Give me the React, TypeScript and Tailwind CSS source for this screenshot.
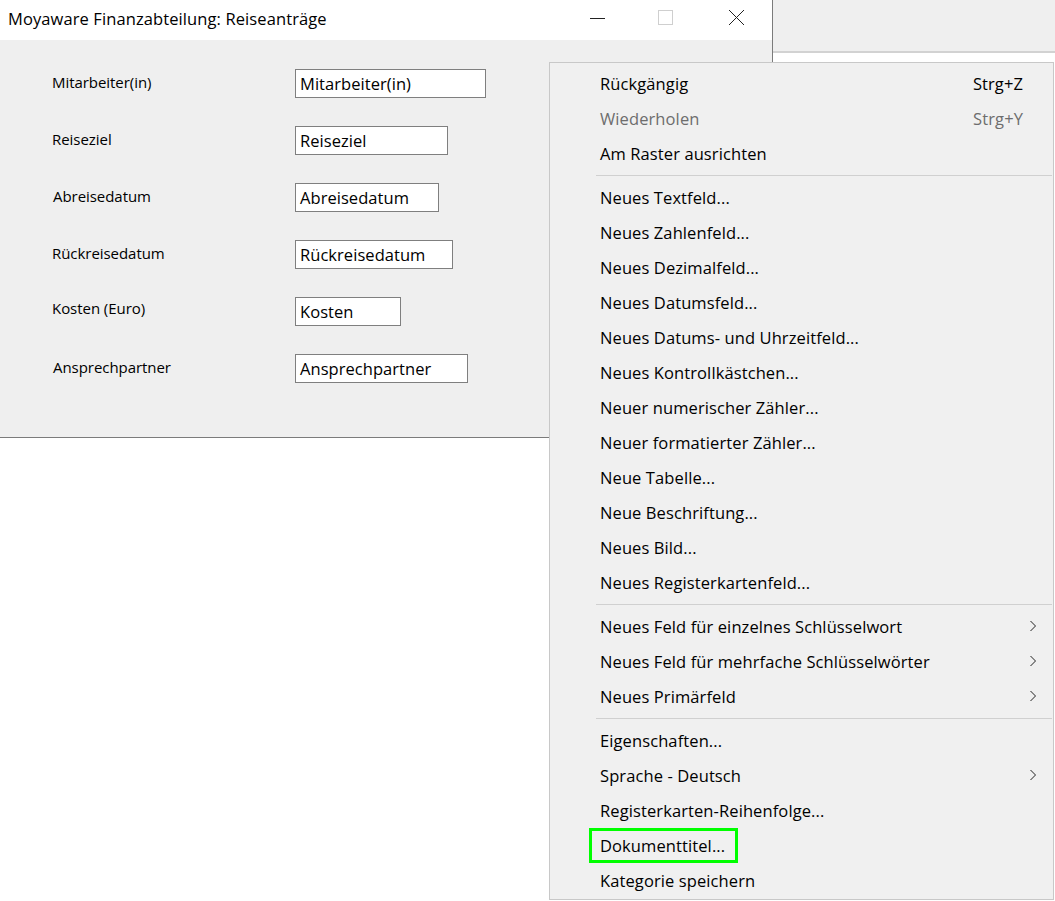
const FONT = "font-['Open_Sans','Noto_Sans',sans-serif]";

const fields = [
  { label: "Mitarbeiter(in)", value: "Mitarbeiter(in)", w: "w-[191px]", lx: "ml-0", ly: "-mt-[3px]" },
  { label: "Reiseziel", value: "Reiseziel", w: "w-[153px]", lx: "ml-0", ly: "-mt-[3px]" },
  { label: "Abreisedatum", value: "Abreisedatum", w: "w-[144px]", lx: "ml-[1px]", ly: "-mt-[3px]" },
  { label: "Rückreisedatum", value: "Rückreisedatum", w: "w-[158px]", lx: "ml-0", ly: "-mt-[3px]" },
  { label: "Kosten (Euro)", value: "Kosten", w: "w-[106px]", lx: "ml-0", ly: "-mt-[6px]" },
  { label: "Ansprechpartner", value: "Ansprechpartner", w: "w-[173px]", lx: "ml-[1px]", ly: "-mt-[2px]" },
];

type Item = { t: string; key?: string; off?: boolean; sub?: boolean; mark?: boolean };
const groups: Item[][] = [
  [
    { t: "Rückgängig", key: "Strg+Z" },
    { t: "Wiederholen", key: "Strg+Y", off: true },
    { t: "Am Raster ausrichten" },
  ],
  [
    { t: "Neues Textfeld..." },
    { t: "Neues Zahlenfeld..." },
    { t: "Neues Dezimalfeld..." },
    { t: "Neues Datumsfeld..." },
    { t: "Neues Datums- und Uhrzeitfeld..." },
    { t: "Neues Kontrollkästchen..." },
    { t: "Neuer numerischer Zähler..." },
    { t: "Neuer formatierter Zähler..." },
    { t: "Neue Tabelle..." },
    { t: "Neue Beschriftung..." },
    { t: "Neues Bild..." },
    { t: "Neues Registerkartenfeld..." },
  ],
  [
    { t: "Neues Feld für einzelnes Schlüsselwort", sub: true },
    { t: "Neues Feld für mehrfache Schlüsselwörter", sub: true },
    { t: "Neues Primärfeld", sub: true },
  ],
  [
    { t: "Eigenschaften..." },
    { t: "Sprache - Deutsch", sub: true },
    { t: "Registerkarten-Reihenfolge..." },
    { t: "Dokumenttitel...", mark: true },
    { t: "Kategorie speichern" },
  ],
];

function Chevron() {
  return (
    <svg width="8" height="12" viewBox="0 0 8 12" fill="none" stroke="#222222" strokeWidth="1">
      <path d="M1.5 1 L6.5 6 L1.5 11" />
    </svg>
  );
}

function MenuRow({ item }: { item: Item }) {
  return (
    <div className={`relative flex h-[35px] items-center pl-[50px] pr-[30px] pt-[2px] text-[16.5px] tracking-[0.1px] ${item.off ? "text-[#6d6d6d]" : "text-black"}`}>
      <span className="flex-1 whitespace-nowrap">{item.t}</span>
      {item.key && <span className="whitespace-nowrap">{item.key}</span>}
      {item.sub && (
        <span className="absolute right-[16px] top-[11px]">
          <Chevron />
        </span>
      )}
      {item.mark && (
        <span className="absolute left-[39px] top-0 h-[35px] w-[149px] border-[3px] border-[#00ff00]" />
      )}
    </div>
  );
}

export default function App() {
  return (
    <div className={`relative h-[901px] w-[1055px] overflow-hidden bg-white ${FONT}`}>
      <div className="flex items-start">
        <div className="w-[773px] border-r border-b border-[#7b7b7b]">
          <div className="flex h-[40px] items-center bg-white pb-[2px] pl-[8px] text-[16.5px] tracking-[0.1px] text-black">
            <span className="flex-1 whitespace-nowrap">Moyaware Finanzabteilung: Reiseanträge</span>
            <div className="-mt-[3px] flex items-center pr-[27px]">
              <svg width="16" height="16" viewBox="0 0 16 16" className="mr-[52px]" fill="none" stroke="#222222">
                <path d="M0 8.5 H15" />
              </svg>
              <svg width="16" height="16" viewBox="0 0 16 16" className="mr-[54px]" fill="none" stroke="#cfcfcf">
                <rect x="0.5" y="0.5" width="14" height="14" />
              </svg>
              <svg width="17" height="17" viewBox="0 0 17 17" fill="none" stroke="#222222">
                <path d="M1 1 L16 16 M16 1 L1 16" />
              </svg>
            </div>
          </div>
          <div className="flex h-[397px] flex-col gap-[28px] bg-[#efefef] pl-[52px] pt-[29px]">
            {fields.map((f) => (
              <div key={f.label} className="flex h-[29px] items-center">
                <div className={`w-[243px] shrink-0 whitespace-nowrap text-[15px] tracking-[-0.05px] text-black ${f.ly}`}>
                  <span className={f.lx + " inline-block"}>{f.label}</span>
                </div>
                <div className={`flex h-[29px] items-center border border-[#7f7f7f] bg-white pl-[4px] pt-[2px] text-[16.5px] tracking-[0.05px] text-black ${f.w}`}>
                  {f.value}
                </div>
              </div>
            ))}
          </div>
        </div>
        <div className="h-[53px] flex-1 border-b-2 border-[#d2d2d2] bg-[#efefef]" />
      </div>

      <div className="absolute left-[549px] top-[62px] h-[838px] w-[505px] border border-[#c8c8c8] bg-[#f0f0f0] pt-[3px]">
        {groups.map((g, i) => (
          <div key={i}>
            {i > 0 && (
              <div className="flex h-[9px] items-center pl-[46px] pr-[1px]">
                <div className="h-[1px] w-full bg-[#d0d0d0]" />
              </div>
            )}
            {g.map((it) => (
              <MenuRow key={it.t} item={it} />
            ))}
          </div>
        ))}
      </div>
    </div>
  );
}
